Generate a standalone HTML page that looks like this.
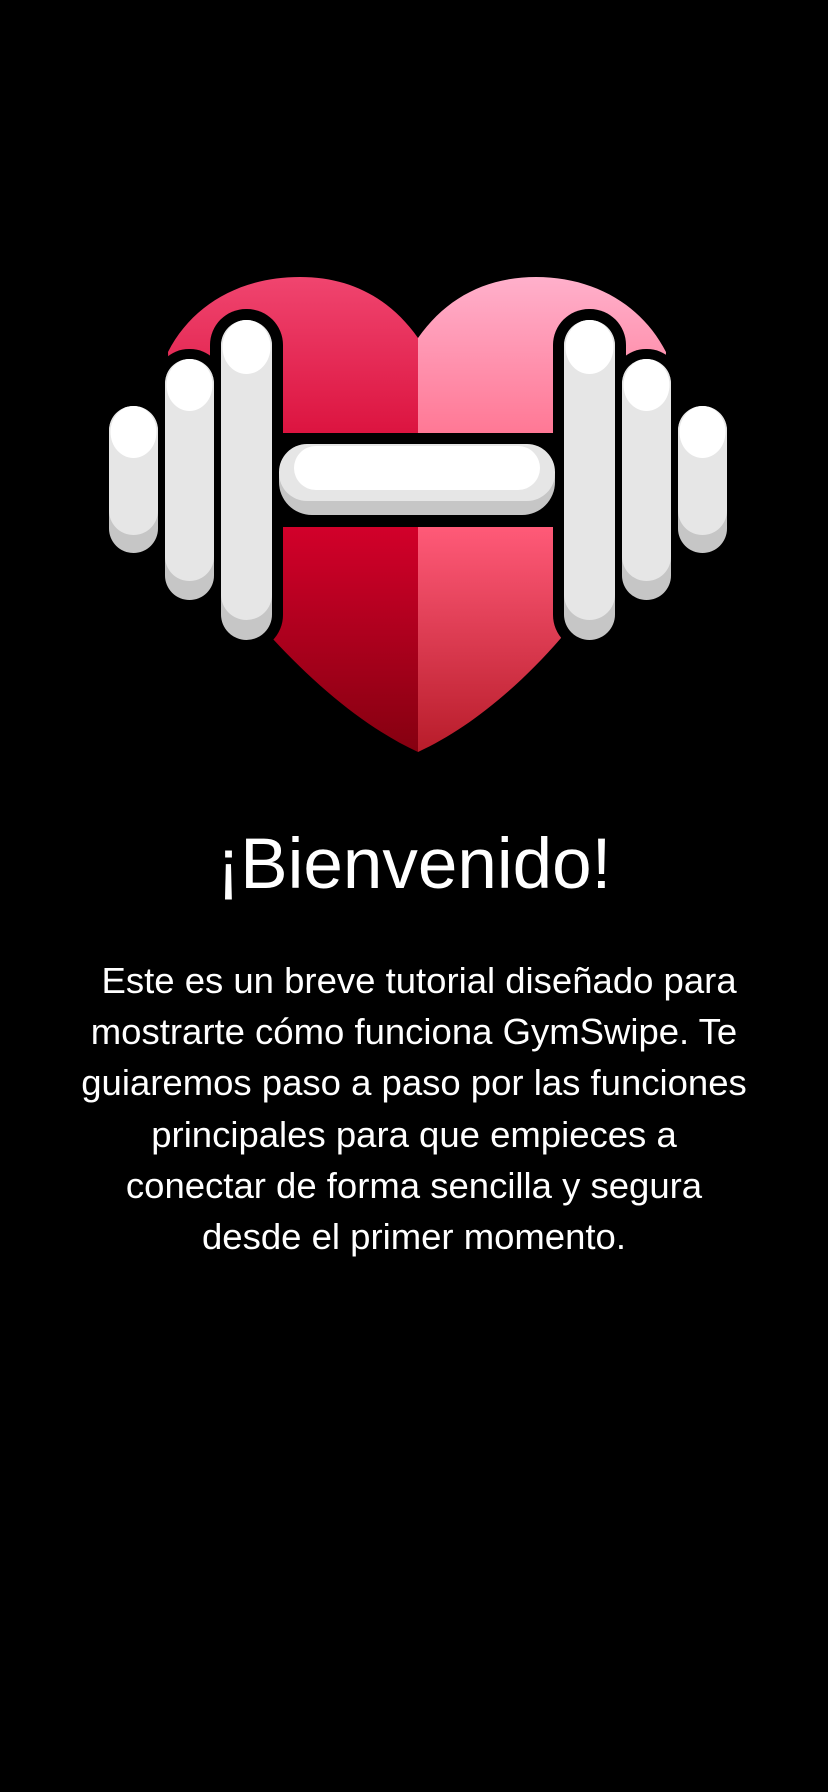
<!DOCTYPE html>
<html><head><meta charset="utf-8"><style>
html,body{margin:0;padding:0;background:#000;}
body{width:828px;height:1792px;position:relative;overflow:hidden;font-family:"Liberation Sans",sans-serif;color:#fff;}
svg{position:absolute;left:0;top:0;}
h1{position:absolute;top:825px;left:0;width:828px;text-align:center;margin:0;font-size:71px;font-weight:normal;line-height:80px;}
p{position:absolute;top:955px;left:0;width:828px;text-align:center;margin:0;font-size:36.5px;line-height:51.2px;white-space:nowrap;}
</style></head><body>
<svg width="828" height="800" viewBox="0 0 828 800">
<defs>
<linearGradient id="lt" x1="0" y1="277" x2="0" y2="433" gradientUnits="userSpaceOnUse"><stop offset="0" stop-color="#f0456f"/><stop offset="1" stop-color="#dc1440"/></linearGradient>
<linearGradient id="rt" x1="0" y1="277" x2="0" y2="433" gradientUnits="userSpaceOnUse"><stop offset="0" stop-color="#ffb0cb"/><stop offset="1" stop-color="#ff7895"/></linearGradient>
<linearGradient id="lb" x1="0" y1="527" x2="0" y2="752" gradientUnits="userSpaceOnUse"><stop offset="0" stop-color="#d2002a"/><stop offset="1" stop-color="#850010"/></linearGradient>
<linearGradient id="rb" x1="0" y1="527" x2="0" y2="752" gradientUnits="userSpaceOnUse"><stop offset="0" stop-color="#ff5a78"/><stop offset="1" stop-color="#b81c2a"/></linearGradient>
<path id="heart" d="M418,338 C390,298 350,277 300,277 C240,277 192,305 168,352 C170,450 230,580 272,638 C320,690 370,730 418,752 C466,730 516,690 561,638 C605,580 664,450 666,352 C642,305 594,277 536,277 C486,277 446,298 418,338 Z"/>
<clipPath id="cLT"><rect x="0" y="0" width="418" height="433"/></clipPath>
<clipPath id="cRT"><rect x="418" y="0" width="410" height="433"/></clipPath>
<clipPath id="cLB"><rect x="0" y="527" width="418" height="300"/></clipPath>
<clipPath id="cRB"><rect x="418" y="527" width="410" height="300"/></clipPath>
</defs>
<use href="#heart" fill="url(#lt)" clip-path="url(#cLT)"/>
<use href="#heart" fill="url(#rt)" clip-path="url(#cRT)"/>
<use href="#heart" fill="url(#lb)" clip-path="url(#cLB)"/>
<use href="#heart" fill="url(#rb)" clip-path="url(#cRB)"/>
<g fill="#000">
<rect x="99" y="396" width="69" height="167" rx="34"/>
<rect x="155" y="349" width="69" height="261" rx="34"/>
<rect x="210" y="309" width="73" height="342" rx="36"/>
<rect x="668" y="396" width="69" height="167" rx="34"/>
<rect x="612" y="349" width="69" height="261" rx="34"/>
<rect x="553" y="309" width="73" height="342" rx="36"/>
<rect x="266" y="434" width="302" height="92" rx="30"/>
</g>
<g>
<rect x="109" y="406" width="49" height="147" rx="24.5" fill="#c6c6c6"/>
<rect x="109" y="406" width="49" height="129" rx="24.5" fill="#e6e6e6"/>
<ellipse cx="133.5" cy="432" rx="23" ry="26" fill="#fff"/>
<rect x="165" y="359" width="49" height="241" rx="24.5" fill="#c6c6c6"/>
<rect x="165" y="359" width="49" height="222" rx="24.5" fill="#e6e6e6"/>
<ellipse cx="189.5" cy="385" rx="23" ry="26" fill="#fff"/>
<rect x="221" y="320" width="51" height="320" rx="25.5" fill="#c6c6c6"/>
<rect x="221" y="320" width="51" height="300" rx="25.5" fill="#e6e6e6"/>
<ellipse cx="246.5" cy="347" rx="24" ry="27" fill="#fff"/>
<rect x="678" y="406" width="49" height="147" rx="24.5" fill="#c6c6c6"/>
<rect x="678" y="406" width="49" height="129" rx="24.5" fill="#e6e6e6"/>
<ellipse cx="702.5" cy="432" rx="23" ry="26" fill="#fff"/>
<rect x="622" y="359" width="49" height="241" rx="24.5" fill="#c6c6c6"/>
<rect x="622" y="359" width="49" height="222" rx="24.5" fill="#e6e6e6"/>
<ellipse cx="646.5" cy="385" rx="23" ry="26" fill="#fff"/>
<rect x="564" y="320" width="51" height="320" rx="25.5" fill="#c6c6c6"/>
<rect x="564" y="320" width="51" height="300" rx="25.5" fill="#e6e6e6"/>
<ellipse cx="589.5" cy="347" rx="24" ry="27" fill="#fff"/>
<rect x="279" y="444" width="276" height="71" rx="33" fill="#c6c6c6"/>
<rect x="279" y="444" width="276" height="57" rx="28" fill="#e6e6e6"/>
<rect x="294" y="446" width="246" height="44" rx="22" fill="#fff"/>
</g>
</svg>
<h1>¡Bienvenido!</h1>
<p>&nbsp;Este es un breve tutorial diseñado para<br>mostrarte cómo funciona GymSwipe. Te<br>guiaremos paso a paso por las funciones<br>principales para que empieces a<br>conectar de forma sencilla y segura<br>desde el primer momento.</p>
</body></html>
